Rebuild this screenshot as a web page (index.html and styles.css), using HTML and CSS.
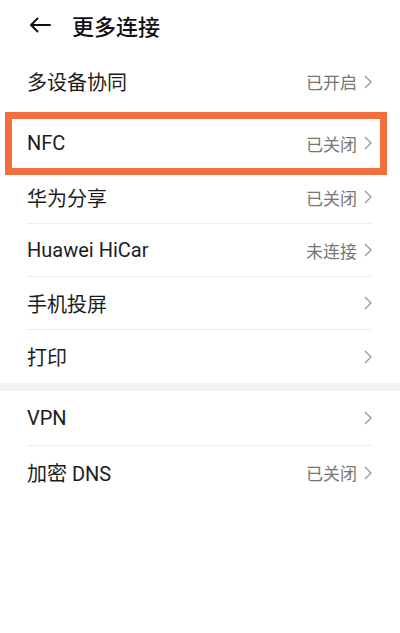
FILE: index.html
```html
<!DOCTYPE html>
<html lang="zh-CN">
<head>
  <meta charset="UTF-8" />
  <meta name="viewport" content="width=device-width, initial-scale=1" />
  <title>更多连接</title>
  <link rel="stylesheet" href="styles.css">
</head>
<body>
  <div class="tela">
    <div class="topo">
      <svg class="voltar" width="22" height="16" viewBox="0 0 22 16">
        <path d="M21 8 H2 M8.5 1.5 L2 8 L8.5 14.5" fill="none" stroke="#111" stroke-width="2" stroke-linecap="round" stroke-linejoin="round"/>
      </svg>
      <div class="titulo">更多连接</div>
    </div>

    <div class="grupo">
      <div class="item item-primeiro"><div class="linha"><span class="nome">多设备协同</span><span class="valor">已开启</span><svg class="seta" width="8" height="14" viewBox="0 0 8 14"><path d="M1 1 L7 7 L1 13" fill="none" stroke="#9a9a9a" stroke-width="1.4"/></svg></div></div>
      <div class="item item-nfc"><div class="linha"><span class="nome">NFC</span><span class="valor">已关闭</span><svg class="seta" width="8" height="14" viewBox="0 0 8 14"><path d="M1 1 L7 7 L1 13" fill="none" stroke="#9a9a9a" stroke-width="1.4"/></svg></div><div class="destaque"></div></div>
      <div class="item"><div class="linha"><span class="nome">华为分享</span><span class="valor">已关闭</span><svg class="seta" width="8" height="14" viewBox="0 0 8 14"><path d="M1 1 L7 7 L1 13" fill="none" stroke="#9a9a9a" stroke-width="1.4"/></svg></div></div>
      <div class="item"><div class="linha"><span class="nome">Huawei HiCar</span><span class="valor">未连接</span><svg class="seta" width="8" height="14" viewBox="0 0 8 14"><path d="M1 1 L7 7 L1 13" fill="none" stroke="#9a9a9a" stroke-width="1.4"/></svg></div></div>
      <div class="item"><div class="linha"><span class="nome">手机投屏</span><svg class="seta" width="8" height="14" viewBox="0 0 8 14"><path d="M1 1 L7 7 L1 13" fill="none" stroke="#9a9a9a" stroke-width="1.4"/></svg></div></div>
      <div class="item"><div class="linha ultima"><span class="nome">打印</span><svg class="seta" width="8" height="14" viewBox="0 0 8 14"><path d="M1 1 L7 7 L1 13" fill="none" stroke="#9a9a9a" stroke-width="1.4"/></svg></div></div>
    </div>

    <div class="faixa"></div>

    <div class="grupo">
      <div class="item item-vpn"><div class="linha"><span class="nome">VPN</span><svg class="seta" width="8" height="14" viewBox="0 0 8 14"><path d="M1 1 L7 7 L1 13" fill="none" stroke="#9a9a9a" stroke-width="1.4"/></svg></div></div>
      <div class="item"><div class="linha ultima"><span class="nome">加密 DNS</span><span class="valor">已关闭</span><svg class="seta" width="8" height="14" viewBox="0 0 8 14"><path d="M1 1 L7 7 L1 13" fill="none" stroke="#9a9a9a" stroke-width="1.4"/></svg></div></div>
    </div>
  </div>
</body>
</html>
```

FILE: styles.css
```css
body {
  margin: 0;
  background: #fff;
  font-family: Roboto, "Noto Sans CJK SC", sans-serif;
  color: #1a1a1a;
}

.tela {
  width: 400px;
  height: 633px;
  background: #fff;
  overflow: hidden;
}

.topo {
  height: 55px;
  display: flex;
  align-items: center;
  padding-left: 29px;
  padding-bottom: 5px;
  box-sizing: border-box;
}

.voltar {
  display: block;
}

.titulo {
  margin-left: 21px;
  font-size: 22px;
  font-weight: 500;
  color: #111;
}

.item {
  position: relative;
  height: 53px;
  padding: 0 28px 0 27px;
}

.item-nfc {
  height: 63px;
  padding-top: 7px;
  box-sizing: border-box;
}

.item-vpn {
  height: 55px;
}

.linha {
  height: 100%;
  display: flex;
  align-items: center;
  border-bottom: 1px solid #ededed;
  box-sizing: border-box;
}

.item-primeiro .linha,
.item-nfc .linha,
.linha.ultima {
  border-bottom: none;
}

.nome {
  flex: 1;
  font-size: 20px;
  color: #1c1c1c;
}

.valor {
  font-size: 17px;
  color: #767676;
  margin-right: 7px;
}

.seta {
  display: block;
}

.destaque {
  position: absolute;
  left: 5px;
  right: 13px;
  top: 4px;
  bottom: -4px;
  border: 7px solid #f26e3c;
}

.faixa {
  height: 8px;
  background: #f3f3f3;
}
```
